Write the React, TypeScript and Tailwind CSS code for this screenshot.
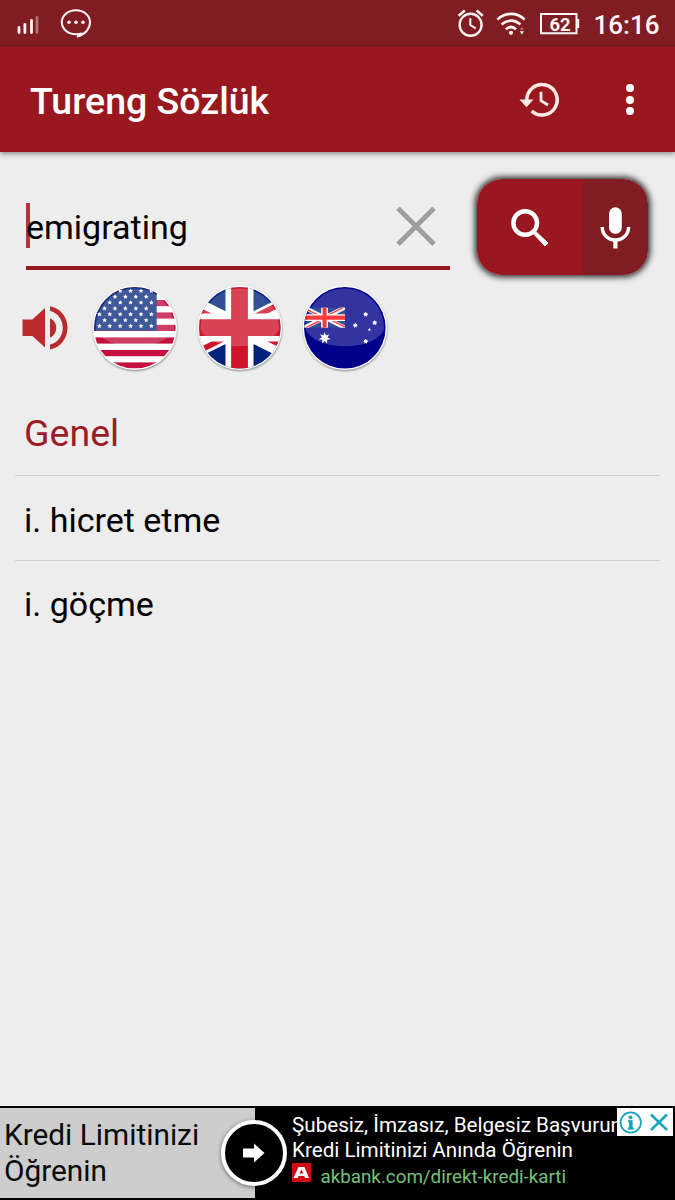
import React from "react";

function starPoints(cx: number, cy: number, r: number, points: number, inner: number) {
  const out: string[] = [];
  for (let i = 0; i < points * 2; i++) {
    const radius = i % 2 === 0 ? r : r * inner;
    const a = (Math.PI * i) / points - Math.PI / 2;
    out.push(`${(cx + radius * Math.cos(a)).toFixed(2)},${(cy + radius * Math.sin(a)).toFixed(2)}`);
  }
  return out.join(" ");
}

function UnionJack({ id, red }: { id: string; red: string }) {
  return (
    <g>
      <clipPath id={id}>
        <path d="M30 15h30v15zv15h-30zh-30v-15zv-15h30z" />
      </clipPath>
      <path d="M0 0h60v30H0z" fill="#00247d" />
      <path d="M0 0l60 30M60 0L0 30" stroke="#fff" strokeWidth="6" />
      <path d="M0 0l60 30M60 0L0 30" stroke={red} strokeWidth="4" clipPath={`url(#${id})`} />
      <path d="M30 0v30M0 15h60" stroke="#fff" strokeWidth="10" />
      <path d="M30 0v30M0 15h60" stroke={red} strokeWidth="6" />
    </g>
  );
}

function RoundFlag({ id, label, children }: { id: string; label: string; children: React.ReactNode }) {
  return (
    <button aria-label={label} className="size-[90px] shrink-0">
      <svg viewBox="0 0 90 90" className="size-full">
        <defs>
          <clipPath id={`${id}-clip`}>
            <circle cx="44.8" cy="44.8" r="40.8" />
          </clipPath>
          <filter id={`${id}-shadow`} x="-10%" y="-10%" width="120%" height="120%">
            <feGaussianBlur stdDeviation="0.9" />
          </filter>
        </defs>
        <circle cx="45.1" cy="46" r="41.9" fill="#000" opacity=".45" filter={`url(#${id}-shadow)`} />
        <circle cx="44.8" cy="44.8" r="42.2" fill="#fff" />
        <g clipPath={`url(#${id}-clip)`}>
          {children}
          <path
            d="M5.5 46C5.5 23 23 5.500 44.800 5.500S84.100 23 84.100 46C80 57 64 63.200 44.800 63.200S10 57 5.500 46z"
            fill="#fff"
            opacity=".2"
          />
        </g>
      </svg>
    </button>
  );
}

function UsFlag() {
  const stars: React.ReactNode[] = [];
  for (let row = 0; row < 8; row++) {
    const offset = row % 2 === 1;
    for (let col = 0; col < (offset ? 5 : 6); col++) {
      stars.push(
        <polygon
          key={`${row}-${col}`}
          points={starPoints(9.4 + col * 10.4 + (offset ? 5.2 : 0), 43 - row * 5.85, 2.5, 5, 0.48)}
          fill="#fff"
        />
      );
    }
  }
  return (
    <RoundFlag id="us" label="American pronunciation">
      <path d="M0 0h90v90H0z" fill="#fff" />
      {[4.6, 17, 29.4, 41.8, 54.4, 67, 79.4].map((y) => (
        <rect key={y} x="0" y={y} width="90" height="6.2" fill="#c4103f" />
      ))}
      <path d="M0 0h66.7v47.7H0z" fill="#0f3080" />
      {stars}
    </RoundFlag>
  );
}

function GbFlag() {
  return (
    <RoundFlag id="gb" label="British pronunciation">
      <g transform="translate(-39.5 2.6) scale(2.8)">
        <UnionJack id="gb-jack" red="#cf142b" />
      </g>
    </RoundFlag>
  );
}

function AuFlag() {
  return (
    <RoundFlag id="au" label="Australian pronunciation">
      <path d="M0 0h90v90H0z" fill="#00008b" />
      <svg x="4.2" y="24.4" width="40.8" height="20.4" viewBox="0 0 60 30">
        <UnionJack id="au-jack" red="#ff0a0a" />
      </svg>
      <g fill="#fff">
        <polygon points={starPoints(24.7, 55, 6, 7, 0.48)} />
        <polygon points={starPoints(65.7, 31.3, 2.6, 7, 0.6)} />
        <polygon points={starPoints(55.3, 42.3, 2.6, 7, 0.6)} />
        <polygon points={starPoints(74.7, 39.7, 2.6, 7, 0.6)} />
        <polygon points={starPoints(69.4, 46.6, 1.6, 5, 0.5)} />
        <polygon points={starPoints(65.7, 58.3, 2.6, 7, 0.6)} />
      </g>
    </RoundFlag>
  );
}

function StatusBar() {
  return (
    <div className="flex h-[47px] items-center justify-between bg-[#7f1d22] text-white">
      <svg width="100" height="47" viewBox="0 0 100 47">
        <g stroke="#fff5f2" strokeWidth="2.8" strokeLinecap="round">
          <path d="M19 27.5v5M24.9 24.5v8M31.5 20.5v12" />
          <path d="M37 17.5v15" opacity=".4" />
        </g>
        <path
          d="M81.5 33.4C79.6 34 77.8 34.2 75.9 34.2c-7.9 0-14.1-5.3-14.1-12S68 10.2 75.9 10.2 90 15.5 90 22.2c0 6.2-4.5 12-12.3 14.2.6-1 .8-1.8.6-2.6"
          fill="none"
          stroke="#fff5f2"
          strokeWidth="2"
          strokeLinejoin="round"
        />
        <path d="M77 37.5c.8-1.4 1-2.5.5-3.8l6-1.2c-1.2 2.2-3.5 4-6.5 5z" fill="#fff5f2" />
        <g fill="#fff5f2">
          <circle cx="69" cy="22.2" r="1.8" />
          <circle cx="76" cy="22.2" r="1.8" />
          <circle cx="83" cy="22.2" r="1.8" />
        </g>
      </svg>
      <div className="flex h-full items-center">
        <svg width="135" height="47" viewBox="450 0 135 47">
          <g fill="none" stroke="#fff5f2">
            <circle cx="470.6" cy="24.8" r="11" strokeWidth="2.4" />
            <path d="M470.3 18.2v6.8l5.4 3.4" strokeWidth="2" />
            <path d="M458.6 15.8l6.2-5.2M482.8 15.8l-6.2-5.2" strokeWidth="2.6" />
            <path d="M497.4 19.5c8-7.4 19.2-7.4 27.2 0" strokeWidth="2.7" />
            <path d="M501.6 24.6c5.6-5.2 13.2-5.2 18.8 0" strokeWidth="2.7" />
            <path d="M505.9 29.3c3.2-2.9 7-2.9 10.2 0" strokeWidth="2.7" />
            <path d="M541 14h35.5v19.2H541z" strokeWidth="2" />
          </g>
          <g fill="#fff5f2">
            <circle cx="511" cy="32.8" r="2.1" />
            <path d="M519.8 31.3h4.2l-2.1 3.3z" />
            <path d="M519.8 29.7h4.2l-2.1-2.8z" opacity=".4" />
            <path d="M577 19h2.2v9H577z" />
          </g>
          <text x="560" y="30.9" textAnchor="middle" fontFamily="Roboto, sans-serif" fontWeight="700" fontSize="18.5" fill="#fff5f2">
            62
          </text>
        </svg>
        <span className="w-[90px] pt-[3px] pl-[8.5px] text-[26px] leading-none font-medium whitespace-nowrap text-[#fff5f2]">16:16</span>
      </div>
    </div>
  );
}

function AppBar() {
  return (
    <header className="relative z-10 flex h-[105px] items-center bg-[#99181f] shadow-[0_2px_5px_rgba(0,0,0,0.4)]">
      <h1 className="flex-1 pt-[5px] pl-[30px] text-[37.5px] leading-none font-medium whitespace-nowrap text-white">
        Tureng Sözlük
      </h1>
      <button aria-label="History" className="mr-[16px]">
        <svg width="60" height="60" viewBox="509.5 69.5 60 60">
          <path d="M527.3 99.5a15.2 15.2 0 1 1 4.9 11" fill="none" stroke="#ffe9e4" strokeWidth="3.5" />
          <path d="M520 99h14l-7 7.7z" fill="#ffe9e4" />
          <path d="M541.5 91.3v9l7 4.2" fill="none" stroke="#ffe9e4" strokeWidth="2.8" />
        </svg>
      </button>
      <button aria-label="More options" className="flex w-[90px] flex-col items-center gap-[3.2px]">
        <span className="size-2 rounded-full bg-white" />
        <span className="size-2 rounded-full bg-white" />
        <span className="size-2 rounded-full bg-white" />
      </button>
    </header>
  );
}

function SearchRow() {
  return (
    <div className="flex items-start pt-[27px] pl-[26px]">
      <div className="mt-[9px] flex h-[82px] w-[424px] items-center border-b-4 border-[#99181f]">
        <div className="relative flex-1 text-[34px] leading-[46px] text-black">
          <span className="absolute -top-px left-0 h-[45px] w-[3.5px] bg-[#b2353d]" />
          <span className="relative">emigrating</span>
        </div>
        <svg width="40" height="40" viewBox="0 0.8 40 40" className="mr-[14px]">
          <path d="M2 2l36 36M38 2L2 38" stroke="#9e9e9e" strokeWidth="4.8" />
        </svg>
      </div>
      <div className="ml-[27px] flex h-[96px] w-[171px] overflow-hidden rounded-[25px] shadow-[0_0_6px_2px_rgba(0,0,0,0.85)]">
        <button aria-label="Search" className="w-[106px] bg-[#99181f]">
          <svg width="106" height="96" viewBox="477 179 106 96">
            <circle cx="525.2" cy="223" r="11.8" fill="none" stroke="#fff" strokeWidth="4.4" />
            <path d="M533.5 231.5l2.2 0 12.3 11.5-3 3-11.5-12.3z" fill="#fff" stroke="#fff" />
          </svg>
        </button>
        <button aria-label="Voice search" className="w-[65px] bg-[#7f1d22]">
          <svg width="65" height="96" viewBox="583 179 65 96">
            <rect x="609" y="207.3" width="12.8" height="26.5" rx="6.4" fill="#fff" />
            <path d="M602.2 227c0 7.5 5.6 13 13.2 13s13.2-5.5 13.2-13" fill="none" stroke="#fff" strokeWidth="3.4" />
            <path d="M613.3 240h4.2v8.5h-4.2z" fill="#fff" />
          </svg>
        </button>
      </div>
    </div>
  );
}

function PronunciationRow() {
  return (
    <div className="mt-[8px] flex items-center gap-[15px] pl-[20px]">
      <svg width="55" height="90" viewBox="20 283 55 90" fill="#b92b2e">
        <path d="M22.5 319.500h9.800L45 308v39.500L32.300 336h-9.800z" />
        <path d="M50 306.3c10 1.6 17.5 10.5 17.5 21.5S60 348 50 349.6v-5c7.5-1.6 12.8-8.6 12.8-16.800S57.500 312.600 50 311z" />
        <path d="M50 318.3c3.8 1.6 6.2 5.3 6.2 9.6s-2.400 8-6.200 9.600z" />
      </svg>
      <UsFlag />
      <GbFlag />
      <AuFlag />
    </div>
  );
}

function Results() {
  return (
    <section className="mx-[15px] mt-[17px]">
      <h2 className="h-[86px] border-b border-[#cfcfcf] pl-[9px] text-[37.5px] leading-[86px] text-[#9c1c26]">Genel</h2>
      <p className="h-[85px] border-b border-[#cfcfcf] pl-[9px] text-[34px] leading-[88px] text-black">i. hicret etme</p>
      <p className="h-[85px] pl-[9px] text-[34px] leading-[86px] text-black">i. göçme</p>
    </section>
  );
}

function AdBanner() {
  return (
    <aside className="relative mt-auto flex h-[94px] border-t-2 border-b-2 border-black bg-black">
      <div className="w-[255px] bg-[#cdcdcd] pt-[9px] pl-[4px] text-[29.8px] leading-[36px] whitespace-nowrap text-[#0a0a0a]">
        <p>Kredi Limitinizi</p>
        <p>Öğrenin</p>
      </div>
      <div className="flex-1 overflow-hidden pt-[5px] pl-[37px] text-[20.65px] leading-[25px] whitespace-nowrap text-white">
        <p>Şubesiz, İmzasız, Belgesiz Başvurun</p>
        <p>Kredi Limitinizi Anında Öğrenin</p>
        <div className="flex items-center">
          <svg width="19" height="19" viewBox="0 0 19 19" className="mb-[8px]">
            <path d="M0 0h19v19H0z" fill="#d20a11" />
            <path d="M6.5 4h6l4.5 11h-4l-.8-2H6.5l-1 2H1.5zM9.3 6.5L7.5 10.5h4z" fill="#fff" fillRule="evenodd" />
          </svg>
          <span className="pt-[2px] pl-[9.5px] text-[18.8px] text-[#74c17a]">akbank.com/direkt-kredi-karti</span>
        </div>
      </div>
      <div className="absolute top-[12px] left-[221px] flex size-[66px] items-center justify-center rounded-full border-4 border-white bg-black shadow-[0_1px_4px_rgba(0,0,0,0.5)]">
        <svg width="22" height="20" viewBox="0 0 22 20">
          <path d="M0 5.5h11V.5L21.5 10 11 19.5v-5H0z" fill="#fff" />
        </svg>
      </div>
      <div className="absolute top-0 right-[2px] h-[28px] w-[56px] bg-white">
        <svg width="56" height="28" viewBox="0 0 56 28" fill="none" stroke="#16a5c0">
          <circle cx="13.7" cy="14.5" r="10.2" strokeWidth="1.8" />
          <circle cx="13.5" cy="9.3" r="1.9" fill="#16a5c0" stroke="none" />
          <path d="M11.3 12.3h4v7.5h1.4v1.500h-5.700v-1.500h1.300V14h-1z" fill="#16a5c0" stroke="#16a5c0" strokeWidth=".6" />
          <path d="M34 6.5L50 22M50 6.5L34 22" strokeWidth="2.5" />
        </svg>
      </div>
    </aside>
  );
}

export default function App() {
  return (
    <main className="flex h-[1200px] w-[675px] flex-col overflow-hidden bg-[#ededed] font-[Roboto,sans-serif]">
      <StatusBar />
      <AppBar />
      <SearchRow />
      <PronunciationRow />
      <Results />
      <AdBanner />
    </main>
  );
}
